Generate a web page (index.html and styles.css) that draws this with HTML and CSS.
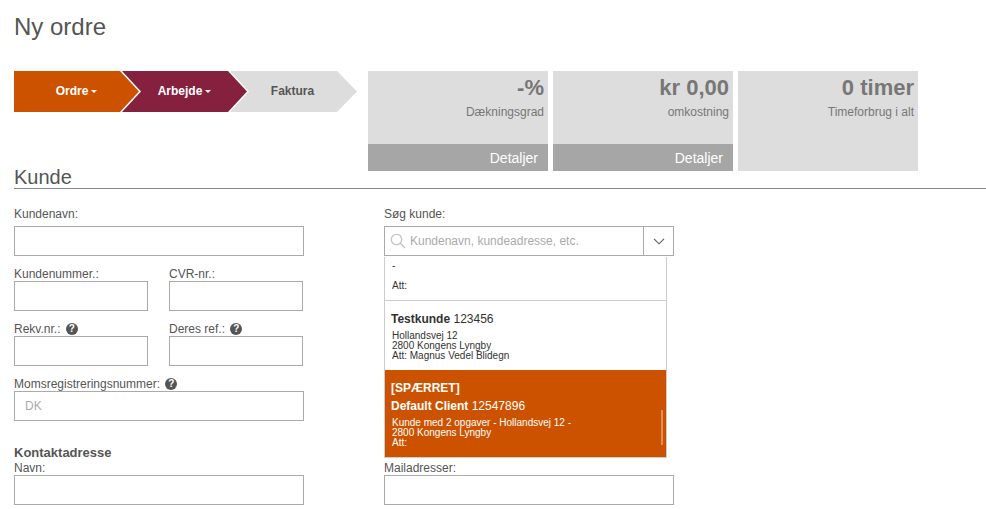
FILE: index.html
```html
<!DOCTYPE html>
<html lang="da">
<head>
<meta charset="utf-8">
<title>Ny ordre</title>
<link rel="stylesheet" href="styles.css">
</head>
<body>
<h1 class="page-title">Ny ordre</h1>
<div class="top-row">
  <div class="steps">
    <div class="step step-order">Ordre <span class="caret"></span></div>
    <div class="step step-work">Arbejde <span class="caret"></span></div>
    <div class="step step-invoice">Faktura</div>
  </div>
  <div class="cards">
    <div class="card">
      <div class="card-body"><div class="card-value">-%</div><div class="card-label">Dækningsgrad</div></div>
      <div class="card-foot">Detaljer</div>
    </div>
    <div class="card">
      <div class="card-body"><div class="card-value">kr 0,00</div><div class="card-label">omkostning</div></div>
      <div class="card-foot">Detaljer</div>
    </div>
    <div class="card">
      <div class="card-body"><div class="card-value">0 timer</div><div class="card-label">Timeforbrug i alt</div></div>
    </div>
  </div>
</div>
<h2 class="section-title">Kunde</h2>
<div class="form">
  <div class="col-left">
    <div class="field first">
      <label class="lbl">Kundenavn:</label>
      <input class="inp" type="text">
    </div>
    <div class="pair">
      <div class="field half">
        <label class="lbl">Kundenummer.:</label>
        <input class="inp" type="text">
      </div>
      <div class="field half">
        <label class="lbl">CVR-nr.:</label>
        <input class="inp" type="text">
      </div>
    </div>
    <div class="pair">
      <div class="field half">
        <label class="lbl">Rekv.nr.: <span class="help">?</span></label>
        <input class="inp" type="text">
      </div>
      <div class="field half">
        <label class="lbl">Deres ref.: <span class="help">?</span></label>
        <input class="inp" type="text">
      </div>
    </div>
    <div class="field">
      <label class="lbl">Momsregistreringsnummer: <span class="help">?</span></label>
      <input class="inp" type="text" placeholder="DK">
    </div>
    <div class="contact-title">Kontaktadresse</div>
    <div class="field">
      <label class="lbl">Navn:</label>
      <input class="inp" type="text">
    </div>
  </div>
  <div class="col-right">
    <div class="field first">
      <label class="lbl">Søg kunde:</label>
      <div class="search">
        <svg class="search-icon" width="16" height="16" viewBox="0 0 16 16" fill="none" stroke="#c4c4c4" stroke-width="1.3"><circle cx="6.5" cy="6.5" r="5.2"/><path d="M10.3 10.3L15 15"/></svg>
        <input class="search-input" type="text" placeholder="Kundenavn, kundeadresse, etc.">
        <div class="search-btn">
          <svg width="12" height="7" viewBox="0 0 12 7" fill="none" stroke="#555" stroke-width="1.1"><path d="M1 0.8L6 5.8L11 0.8"/></svg>
        </div>
        <div class="results">
          <div class="result result-cut">
            <div class="addr">-</div>
            <div class="addr att-only">Att:</div>
          </div>
          <div class="result result-plain">
            <div class="name"><b>Testkunde</b> 123456</div>
            <div class="addr">Hollandsvej 12<br>2800 Kongens Lyngby<br>Att: Magnus Vedel Blidegn</div>
          </div>
          <div class="result result-active">
            <div class="blocked">[SPÆRRET]</div>
            <div class="name"><b>Default Client</b> 12547896</div>
            <div class="addr">Kunde med 2 opgaver - Hollandsvej 12 -<br>2800 Kongens Lyngby<br>Att:</div>
          </div>
          <div class="thumb"></div>
        </div>
      </div>
    </div>
    <div class="field">
      <label class="lbl">Mailadresser:</label>
      <input class="inp" type="text">
    </div>
  </div>
</div>
</body>
</html>
```
FILE: styles.css
```css
* { box-sizing: border-box; }
html, body { margin: 0; padding: 0; }
body {
  width: 986px;
  height: 509px;
  overflow: hidden;
  padding-left: 14px;
  font-family: "Liberation Sans", Arial, sans-serif;
  color: #555;
  background: #fff;
}
.page-title {
  margin: 0;
  padding-top: 13px;
  height: 71px;
  font-size: 24px;
  line-height: 28px;
  font-weight: 400;
  color: #555;
}
.top-row { display: flex; height: 100px; }
.steps { display: flex; width: 354px; height: 41px; }
.step {
  flex: none;
  width: 127px;
  height: 41px;
  margin-right: -19px;
  padding-right: 2px;
  display: flex;
  align-items: center;
  justify-content: center;
  gap: 3px;
  font-size: 12px;
  font-weight: 700;
  line-height: 41px;
}
.step-order {
  background: #cd5200;
  color: #fff;
  clip-path: polygon(0 0, 106px 0, 125px 20.5px, 106px 41px, 0 41px);
}
.step-work {
  background: #85213f;
  color: #fff;
  clip-path: polygon(0 0, 106px 0, 125px 20.5px, 106px 41px, 0 41px, 19px 20.5px);
}
.step-invoice {
  background: #ddd;
  color: #555;
  clip-path: polygon(0 0, 107px 0, 127px 20.5px, 107px 41px, 0 41px, 19px 20.5px);
}
.caret {
  width: 0;
  height: 0;
  border-left: 3.5px solid transparent;
  border-right: 3.5px solid transparent;
  border-top: 3.5px solid #fff;
}
.cards { display: flex; gap: 5px; }
.card {
  width: 180px;
  height: 100px;
  background: #ddd;
  display: flex;
  flex-direction: column;
  justify-content: space-between;
  color: #777;
  text-align: right;
}
.card-body { padding: 4px 4px 0 0; }
.card-value { font-size: 22px; line-height: 25px; font-weight: 700; }
.card-label { font-size: 12px; line-height: 14px; margin-top: 5px; }
.card-foot {
  height: 27px;
  background: #a6a6a6;
  color: #fff;
  font-size: 14px;
  line-height: 28px;
  padding-right: 10px;
}
.section-title {
  margin: 0;
  height: 17px;
  border-bottom: 1px solid #888;
  box-sizing: content-box;
  font-size: 20px;
  line-height: 12px;
  font-weight: 400;
  color: #555;
  overflow: visible;
}
.form { display: flex; gap: 80px; height: 317px; }
.col-left { width: 290px; }
.col-right {
  width: 290px;
  display: flex;
  flex-direction: column;
  justify-content: space-between;
  height: 316px;
}
.field { margin-top: 9px; }
.field.first { margin-top: 19px; }
.pair { display: flex; gap: 21px; }
.half { width: 134px; }
.half .inp { width: 134px; }
.lbl {
  display: block;
  font-size: 12px;
  line-height: 18px;
  height: 16px;
  color: #555;
}
.field.first .lbl { height: 18px; line-height: 12px; }
.inp {
  display: block;
  width: 290px;
  height: 30px;
  border: 1px solid #aaa;
  border-radius: 0;
  padding: 0 10px;
  outline: none;
  background: #fff;
  font-family: inherit;
  font-size: 12px;
}
.inp::placeholder, .search-input::placeholder { color: #aaa; opacity: 1; }
.help {
  display: inline-block;
  width: 12px;
  height: 12px;
  margin-left: 2px;
  border-radius: 50%;
  background: #555;
  color: #fff;
  font-size: 10px;
  font-weight: 700;
  line-height: 12px;
  text-align: center;
  vertical-align: 1px;
}
.contact-title {
  margin-top: 25px;
  font-size: 13px;
  line-height: 14px;
  font-weight: 700;
  color: #555;
}
.contact-title + .field { margin-top: 0; }
.contact-title + .field .lbl { height: 15px; line-height: 16px; }
.search {
  position: relative;
  display: flex;
  align-items: center;
  width: 290px;
  height: 30px;
  border: 1px solid #aaa;
  background: #fff;
}
.search-icon { flex: none; margin-left: 5px; }
.search-input {
  flex: 1;
  min-width: 0;
  height: 28px;
  border: 0;
  outline: none;
  padding: 0 0 0 4px;
  font-family: inherit;
  font-size: 12px;
}
.search-btn {
  flex: none;
  width: 30px;
  height: 28px;
  border-left: 1px solid #aaa;
  display: flex;
  align-items: center;
  justify-content: center;
}
.results {
  position: absolute;
  top: 30px;
  left: -1px;
  width: 283px;
  height: 201px;
  border: 1px solid #ccc;
  border-top: 0;
  background: #fff;
  overflow: hidden;
  color: #333;
}
.result { padding: 0 6px; }
.result-cut { height: 44px; padding-top: 4px; border-bottom: 1px solid #ccc; }
.result-plain { height: 69px; padding-top: 11px; }
.result-active {
  height: 87px;
  padding-top: 11px;
  background: #cd5200;
  color: #fff;
}
.blocked { font-size: 12px; font-weight: 700; line-height: 14px; margin-bottom: 4px; }
.name { font-size: 12px; line-height: 14px; }
.addr { font-size: 10px; line-height: 10px; margin: 5px 0 0 1px; }
.result-cut .addr { margin-top: 0; }
.result-cut .att-only { margin-top: 10px; }
.thumb {
  position: absolute;
  left: 276px;
  top: 153px;
  width: 2px;
  height: 35px;
  background: #dd8f5c;
}
```
